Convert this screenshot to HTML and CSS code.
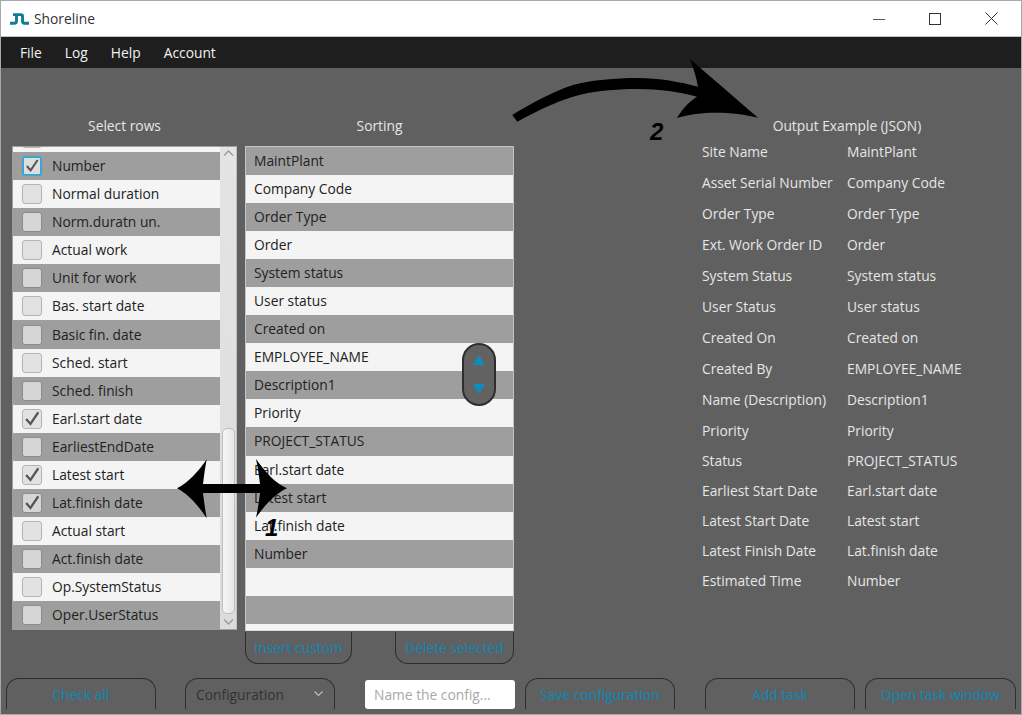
FILE: index.html
```html
<!DOCTYPE html>
<html lang="en">
<head>
<meta charset="utf-8">
<title>Shoreline</title>
<link rel="stylesheet" href="styles.css">
</head>
<body>
<svg class="defs" width="0" height="0" aria-hidden="true">
  <symbol id="tick" viewBox="0 0 20 20"><path d="M3.5 10 L8.3 15.5 L17 2.5" fill="none" stroke="#555" stroke-width="2.5"/></symbol>
</svg>
<div class="app">
  <header class="titlebar">
    <svg class="logo" width="19" height="12" viewBox="0 0 19 12"><path d="M3 1.6 H11 Q12.5 1.6 12.5 3 V8 Q12.5 10.2 14.5 10.2 H19 M11 1.6 H8 Q6.5 1.6 6.5 3.5 V8 Q6.5 10.2 4.5 10.2 H0" fill="none" stroke="#0f7b96" stroke-width="2.9"/></svg>
    <span class="apptitle">Shoreline</span>
    <div class="winctl">
      <svg width="12" height="12" viewBox="0 0 12 12"><path d="M0 6.5 H12" stroke="#555" stroke-width="1"/></svg>
      <svg width="12" height="12" viewBox="0 0 12 12"><rect x="0.5" y="0.5" width="11" height="11" fill="none" stroke="#333" stroke-width="1"/></svg>
      <svg width="13" height="13" viewBox="0 0 13 13"><path d="M0.5 0.5 L12.5 12.5 M12.5 0.5 L0.5 12.5" stroke="#333" stroke-width="1"/></svg>
    </div>
  </header>
  <nav class="menubar"><span>File</span><span>Log</span><span>Help</span><span>Account</span></nav>
  <main class="content">
    <div class="columns">
      <section class="col col-select">
        <h2 class="heading">Select rows</h2>
        <div class="listbox">
          <div class="rows">
            <div class="row light"><span class="cb"></span></div>
            <div class="row dark"><span class="cb focus"><svg><use href="#tick"/></svg></span>Number</div>
            <div class="row light"><span class="cb"></span>Normal duration</div>
            <div class="row dark"><span class="cb"></span>Norm.duratn un.</div>
            <div class="row light"><span class="cb"></span>Actual work</div>
            <div class="row dark"><span class="cb"></span>Unit for work</div>
            <div class="row light"><span class="cb"></span>Bas. start date</div>
            <div class="row dark"><span class="cb"></span>Basic fin. date</div>
            <div class="row light"><span class="cb"></span>Sched. start</div>
            <div class="row dark"><span class="cb"></span>Sched. finish</div>
            <div class="row light"><span class="cb"><svg><use href="#tick"/></svg></span>Earl.start date</div>
            <div class="row dark"><span class="cb"></span>EarliestEndDate</div>
            <div class="row light"><span class="cb"><svg><use href="#tick"/></svg></span>Latest start</div>
            <div class="row dark"><span class="cb"><svg><use href="#tick"/></svg></span>Lat.finish date</div>
            <div class="row light"><span class="cb"></span>Actual start</div>
            <div class="row dark"><span class="cb"></span>Act.finish date</div>
            <div class="row light"><span class="cb"></span>Op.SystemStatus</div>
            <div class="row dark"><span class="cb"></span>Oper.UserStatus</div>
          </div>
          <div class="scrollbar">
            <svg class="chev" width="11" height="6" viewBox="0 0 11 6"><path d="M1 5.5 L5.5 1 L10 5.5" fill="none" stroke="#999" stroke-width="1.3"/></svg>
            <div class="thumb"></div>
            <svg class="chev" width="11" height="6" viewBox="0 0 11 6"><path d="M1 0.5 L5.5 5 L10 0.5" fill="none" stroke="#999" stroke-width="1.3"/></svg>
          </div>
        </div>
      </section>
      <section class="col col-sort">
        <h2 class="heading">Sorting</h2>
        <div class="sortbox">
          <div class="row dark">MaintPlant</div>
          <div class="row light">Company Code</div>
          <div class="row dark">Order Type</div>
          <div class="row light">Order</div>
          <div class="row dark">System status</div>
          <div class="row light">User status</div>
          <div class="row dark">Created on</div>
          <div class="row light">EMPLOYEE_NAME</div>
          <div class="row dark">Description1</div>
          <div class="row light">Priority</div>
          <div class="row dark">PROJECT_STATUS</div>
          <div class="row light">Earl.start date</div>
          <div class="row dark">Latest start</div>
          <div class="row light">Lat.finish date</div>
          <div class="row dark">Number</div>
          <div class="row light"></div>
          <div class="row dark"></div>
          <div class="row light"></div>
          <div class="updown">
            <svg width="12" height="10" viewBox="0 0 12 10"><path d="M6 0 L12 10 H0 Z" fill="#0d8dbd"/></svg>
            <svg width="12" height="10" viewBox="0 0 12 10"><path d="M0 0 H12 L6 10 Z" fill="#0d8dbd"/></svg>
          </div>
        </div>
        <div class="sortactions">
          <button class="btn btn-under btn-insert">Insert custom</button>
          <button class="btn btn-under btn-delete">Delete selected</button>
        </div>
      </section>
      <section class="col col-output">
        <h2 class="heading">Output Example (JSON)</h2>
        <dl class="output">
          <div class="pair"><dt>Site Name</dt><dd>MaintPlant</dd></div>
          <div class="pair"><dt>Asset Serial Number</dt><dd>Company Code</dd></div>
          <div class="pair"><dt>Order Type</dt><dd>Order Type</dd></div>
          <div class="pair"><dt>Ext. Work Order ID</dt><dd>Order</dd></div>
          <div class="pair"><dt>System Status</dt><dd>System status</dd></div>
          <div class="pair"><dt>User Status</dt><dd>User status</dd></div>
          <div class="pair"><dt>Created On</dt><dd>Created on</dd></div>
          <div class="pair"><dt>Created By</dt><dd>EMPLOYEE_NAME</dd></div>
          <div class="pair"><dt>Name (Description)</dt><dd>Description1</dd></div>
          <div class="pair tight"><dt>Priority</dt><dd>Priority</dd></div>
          <div class="pair tight"><dt>Status</dt><dd>PROJECT_STATUS</dd></div>
          <div class="pair tight"><dt>Earliest Start Date</dt><dd>Earl.start date</dd></div>
          <div class="pair tight"><dt>Latest Start Date</dt><dd>Latest start</dd></div>
          <div class="pair tight"><dt>Latest Finish Date</dt><dd>Lat.finish date</dd></div>
          <div class="pair tight"><dt>Estimated Time</dt><dd>Number</dd></div>
        </dl>
      </section>
    </div>
    <footer class="bottombar">
      <button class="btn btn-top w150">Check all</button>
      <div class="btn btn-top w150 select"><span>Configuration</span><svg width="9" height="6" viewBox="0 0 9 6"><path d="M0.5 0.5 L4.5 4.5 L8.5 0.5" fill="none" stroke="#bbb" stroke-width="1.2"/></svg></div>
      <input class="nameinput" type="text" placeholder="Name the config...">
      <button class="btn btn-top w150">Save configuration</button>
      <button class="btn btn-top w150 add">Add task</button>
      <button class="btn btn-top w150 open">Open task window</button>
    </footer>
  </main>
  <svg class="annot" width="1022" height="715" viewBox="0 0 1022 715" aria-hidden="true">
    <path d="M177 488.3 C188 483 198 472 206.7 459.3 C205 468 204 476 203 484 H260 C259 476 258 468 256 459 C265 472 275 483 287 488.3 C275 494 265 505 256 517.5 C258 509 259 501 260 493 H203 C204 501 205 509 206.7 518.3 C198 505 188 494 177 488.3 Z" fill="#000"/>
    <path d="M512.3 115 C530 104 552 92 573 85 C592 80 615 78 637 78 C660 78 680 82 698 86.7 C696 76 693 67 690 59 C712 78 735 98 758 117.7 C735 112 702 110 677 118 C683 108 690 101 697 96.7 C680 92 660 89 637 89 C615 89 592 91 573 96.7 C555 102 535 112 517.3 121.7 Z" fill="#000"/>
  </svg>
  <span class="mark mark1">1</span>
  <span class="mark mark2">2</span>
</div>
</body>
</html>
```
FILE: styles.css
```css
* { box-sizing: border-box; }
html, body { margin: 0; padding: 0; }
body { width: 1022px; height: 715px; overflow: hidden; font-family: "Open Sans", "Noto Sans", sans-serif; font-size: 13.8px; }
.defs { position: absolute; }
.app { position: relative; width: 1022px; height: 715px; border: 1px solid #a8a8a8; display: flex; flex-direction: column; background: #606060; overflow: hidden; }

.titlebar { height: 36px; flex: none; background: #fff; display: flex; align-items: center; padding-left: 9px; border-bottom: 1px solid #c4c4c4; }
.logo { margin-right: 5px; }
.apptitle { color: #333; }
.winctl { margin-left: auto; display: flex; align-items: center; gap: 44px; padding-right: 23px; }

.menubar { height: 31px; flex: none; background: #1e1e1e; color: #f2f2f2; display: flex; align-items: center; gap: 23px; padding-left: 19px; }

.content { flex: 1; display: flex; flex-direction: column; }
.columns { display: flex; padding: 47px 0 0 11px; height: 609px; }
.col { display: flex; flex-direction: column; }
.col-select { width: 225px; }
.col-sort { width: 269px; margin-left: 8px; }
.col-output { width: 290px; margin-left: 188px; }
.heading { margin: 0 0 8px; height: 23px; line-height: 21px; font-size: inherit; font-weight: 400; text-align: center; color: #e6e6e6; }

.listbox { height: 484px; display: flex; background: #f4f4f4; border: 1px solid #a0a0a0; border-right-color: #c0c0c0; }
.rows { flex: 1; min-width: 0; display: flex; flex-direction: column; justify-content: flex-end; overflow: hidden; }
.row { height: 28.06px; flex: none; display: flex; align-items: center; color: #222; padding: 0 0 1px 8px; white-space: nowrap; }
.row.dark { background: #9e9e9e; }
.row.light { background: #f4f4f4; }
.cb { width: 20px; height: 20px; flex: none; margin: 1px 10px 0 1px; background: #e2e2e2; border: 1px solid #b4b4b4; border-radius: 3px; display: flex; }
.dark .cb { background: #d6d6d6; border-color: #8c8c8c; }
.cb.focus { border: 2px solid #3aa7d0; background: #dedede; }
.cb svg { width: 100%; height: 100%; }

.scrollbar { width: 16px; flex: none; display: flex; flex-direction: column; align-items: center; background: linear-gradient(#e4e4e4, #dcdcdc); padding: 3px 0 4px; }
.chev { flex: none; }
.thumb { width: 13px; height: 186px; margin-top: auto; margin-bottom: 5px; background: linear-gradient(90deg, #f6f6f6, #e6e6e6); border: 1px solid #bdbdbd; border-radius: 5px; }

.sortbox { position: relative; height: 485px; overflow: hidden; background: #f4f4f4; border: 1px solid #c4c4c4; border-bottom-color: #dcdcdc; }
.updown { position: absolute; left: 216px; top: 196px; width: 34px; height: 63px; border: 2px solid #2e2e2e; border-radius: 17px; background: #626262; display: flex; flex-direction: column; align-items: center; justify-content: space-between; padding: 10px 0; }

.sortactions { display: flex; justify-content: space-between; }
.btn { font: inherit; background: transparent; color: #0d88b6; border: 1px solid #2e2e2e; padding: 0; }
.btn-under { height: 32px; margin-top: 1px; border-top: 0; border-radius: 0 0 13px 13px; }
.btn-insert { width: 107px; }
.btn-delete { width: 119px; }

.output { margin: -4px 0 0; display: flex; flex-direction: column; }
.pair { height: 31px; flex: none; display: flex; align-items: flex-start; line-height: 20px; color: #e6e6e6; }
.pair.tight { height: 30px; }
.pair dt { width: 145px; flex: none; }
.pair dd { margin: 0; }

.bottombar { display: flex; align-items: flex-start; padding: 1px 0 0 5px; }
.btn-top { height: 31px; border-bottom: 0; border-radius: 13px 13px 0 0; flex: none; }
.w150 { width: 150px; }
.select { margin-left: 29px; display: flex; align-items: center; justify-content: space-between; padding: 0 11px 0 10px; color: #333; }
.nameinput { width: 150px; height: 29px; margin: 2px 10px 0 30px; flex: none; border: 0; border-radius: 3px; background: #fff; padding: 0 9px; font: inherit; }
.nameinput::placeholder { color: #a8a8a8; opacity: 1; }
.add { margin-left: 30px; }
.open { margin-left: 10px; width: 151px; }

.annot { position: absolute; left: -1px; top: -1px; pointer-events: none; }
.mark { position: absolute; font-family: "Liberation Sans", sans-serif; font-weight: 700; font-style: italic; font-size: 24px; line-height: 24px; color: #000; }
.mark1 { left: 264px; top: 515px; }
.mark2 { left: 649px; top: 119px; }
```
